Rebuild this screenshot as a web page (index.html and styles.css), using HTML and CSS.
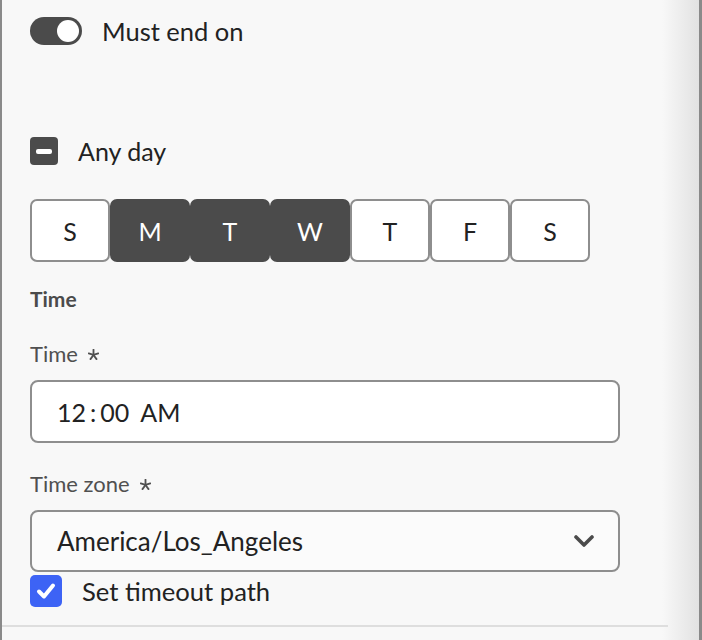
FILE: index.html
```html
<!DOCTYPE html>
<html>
<head>
<meta charset="utf-8">
<link rel="stylesheet" href="styles.css">
</head>
<body>
<div class="panel">
  <div class="content">
    <div class="toggle-row">
      <span class="toggle"><span class="knob"></span></span>
      <span class="toggle-label">Must end on</span>
    </div>

    <div class="check-row anyday">
      <span class="box indeterminate"><span class="dash"></span></span>
      <span class="check-label">Any day</span>
    </div>

    <div class="days">
      <button class="day">S</button>
      <button class="day on">M</button>
      <button class="day on">T</button>
      <button class="day on">W</button>
      <button class="day">T</button>
      <button class="day">F</button>
      <button class="day">S</button>
    </div>

    <div class="heading">Time</div>

    <div class="field">
      <div class="label">Time <svg class="req" viewBox="0 0 12 12" width="11" height="11"><g stroke="#505050" stroke-width="2" stroke-linecap="round"><line x1="6" y1="6.5" x2="6" y2="0.8"/><line x1="6" y1="6.5" x2="11.2" y2="4.8"/><line x1="6" y1="6.5" x2="0.8" y2="4.8"/><line x1="6" y1="6.5" x2="9.3" y2="11"/><line x1="6" y1="6.5" x2="2.7" y2="11"/></g></svg></div>
      <div class="input time-input"><span>12</span><span class="colon">:</span><span>00</span><span class="ampm">AM</span></div>
    </div>

    <div class="field">
      <div class="label">Time zone <svg class="req" viewBox="0 0 12 12" width="11" height="11"><g stroke="#505050" stroke-width="2" stroke-linecap="round"><line x1="6" y1="6.5" x2="6" y2="0.8"/><line x1="6" y1="6.5" x2="11.2" y2="4.8"/><line x1="6" y1="6.5" x2="0.8" y2="4.8"/><line x1="6" y1="6.5" x2="9.3" y2="11"/><line x1="6" y1="6.5" x2="2.7" y2="11"/></g></svg></div>
      <div class="input select"><span class="select-value">America/Los_Angeles</span>
        <svg class="chevron" viewBox="0 0 20 12" width="20" height="12"><polyline points="2,2 10,10 18,2" fill="none" stroke="#4b4b4b" stroke-width="3.6" stroke-linecap="round" stroke-linejoin="round"/></svg>
      </div>
    </div>

    <div class="check-row timeout">
      <span class="box checked"><svg viewBox="0 0 32 32" width="32" height="32"><polyline points="9,16.5 14,21.5 23,10.5" fill="none" stroke="#fff" stroke-width="4" stroke-linecap="round" stroke-linejoin="round"/></svg></span>
      <span class="check-label">Set timeout path</span>
    </div>
  </div>
  <div class="divider"></div>
</div>
</body>
</html>
```

FILE: styles.css
```css
html, body {
  margin: 0;
  padding: 0;
  background: #f8f8f8;
}
body {
  width: 702px;
  height: 640px;
  overflow: hidden;
  font-family: "Lato", "Open Sans", "Liberation Sans", sans-serif;
  color: #222;
}
.panel {
  box-sizing: border-box;
  width: 702px;
  height: 640px;
  border-left: 2px solid #8a8a8a;
  border-right: 3px solid #8a8a8a;
  background: linear-gradient(to right, #f8f8f8 0, #f8f8f8 660px, #e2e2e2 697px);
  display: flex;
  flex-direction: column;
}
.content {
  padding: 17px 0 0 28px;
  display: flex;
  flex-direction: column;
  align-items: flex-start;
}
.toggle-row {
  display: flex;
  align-items: center;
  height: 28px;
}
.toggle {
  box-sizing: border-box;
  width: 52px;
  height: 28px;
  border-radius: 14px;
  background: #4b4b4b;
  display: flex;
  align-items: center;
  justify-content: flex-end;
  padding-right: 3px;
}
.knob {
  width: 22px;
  height: 22px;
  border-radius: 50%;
  background: #fff;
}
.toggle-label {
  margin-left: 20px;
  font-size: 25.5px;
  line-height: 28px;
  color: #222;
}
.check-row {
  display: flex;
  align-items: center;
}
.anyday {
  margin-top: 92px;
  height: 28px;
}
.box {
  display: flex;
  align-items: center;
  justify-content: center;
  box-sizing: border-box;
}
.indeterminate {
  width: 28px;
  height: 28px;
  border-radius: 4px;
  background: #4b4b4b;
}
.dash {
  width: 16px;
  height: 5px;
  border-radius: 2px;
  background: #fff;
}
.check-label {
  margin-left: 20px;
  font-size: 25px;
  color: #222;
}
.timeout .check-label {
  font-size: 25.6px;
}
.days {
  margin-top: 34px;
  display: flex;
}
.day {
  box-sizing: border-box;
  width: 80px;
  height: 63px;
  border: 2px solid #8e8e8e;
  border-radius: 7px;
  background: #fff;
  color: #222;
  font-family: inherit;
  font-size: 25px;
  padding: 0;
  margin: 0;
}
.day.on {
  background: #4b4b4b;
  border-color: #4b4b4b;
  color: #fff;
}
.heading {
  margin-top: 23px;
  font-size: 21px;
  font-weight: bold;
  color: #4b4b4b;
  line-height: 28px;
}
.field {
  display: flex;
  flex-direction: column;
  align-items: flex-start;
}
.label {
  margin-top: 27px;
  font-size: 22px;
  line-height: 28px;
  color: #505050;
  display: flex;
  align-items: center;
  height: 28px;
}
.req {
  margin-left: 10px;
}
.input {
  box-sizing: border-box;
  width: 590px;
  height: 63px;
  margin-top: 12px;
  border: 2px solid #8e8e8e;
  border-radius: 8px;
  background: #fff;
  display: flex;
  align-items: center;
  padding-left: 25px;
  font-size: 25px;
  color: #222;
}
.time-input .colon {
  margin: 0 4px;
}
.time-input .ampm {
  margin-left: 11px;
}
.select {
  height: 62px;
  background: #fbfbfb;
  justify-content: space-between;
  padding-right: 24px;
}
.select-value {
  font-size: 26px;
}
.timeout {
  margin-top: 3px;
  height: 32px;
}
.checked {
  width: 32px;
  height: 32px;
  border-radius: 5px;
  background: #3d63f5;
}
.divider {
  margin-top: auto;
  margin-bottom: 13px;
  width: 666px;
  height: 2px;
  background: #dedede;
}
```
